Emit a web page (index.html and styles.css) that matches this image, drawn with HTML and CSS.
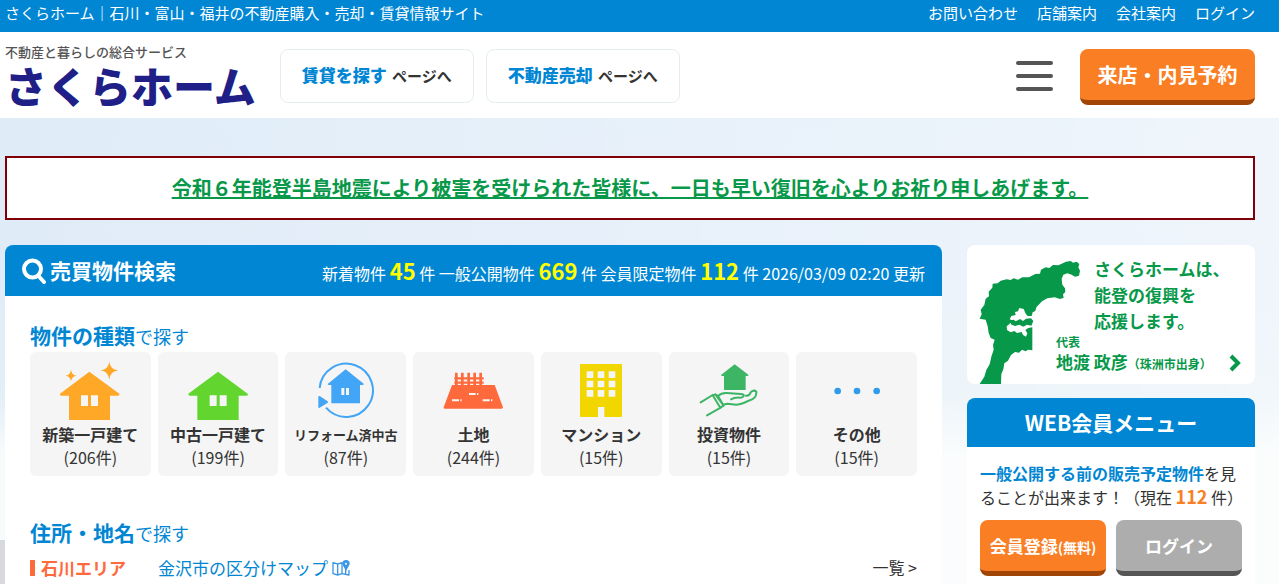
FILE: index.html
```html
<!DOCTYPE html>
<html lang="ja">
<head>
    <meta charset="UTF-8">
    <meta name="viewport" content="width=device-width, initial-scale=1.0">
    <title>さくらホーム｜石川・富山・福井の不動産購入・売却・賃貸情報サイト</title>
    <link rel="stylesheet" href="styles.css">
</head>
<body>
    <!-- Top Bar -->
    <div class="top-bar">
        <p>さくらホーム｜石川・富山・福井の不動産購入・売却・賃貸情報サイト</p>
        <nav class="top-nav">
            <a href="#">お問い合わせ</a>
            <a href="#">店舗案内</a>
            <a href="#">会社案内</a>
            <a href="#">ログイン</a>
        </nav>
    </div>

    <!-- Header -->
    <header class="header">
        <a href="#" class="logo">
            <span class="logo-tagline">不動産と暮らしの総合サービス</span>
            <span class="logo-name">さくらホーム</span>
        </a>
        <a href="#" class="page-link"><b>賃貸を探す</b> ページへ</a>
        <a href="#" class="page-link"><b>不動産売却</b> ページへ</a>
        <button class="menu-btn" aria-label="メニュー">
            <span></span>
            <span></span>
            <span></span>
        </button>
        <button class="btn reserve-btn">来店・内見予約</button>
    </header>

    <div class="container">
        <div class="notice">
            <a href="#">令和６年能登半島地震により被害を受けられた皆様に、一日も早い復旧を心よりお祈り申しあげます。</a>
        </div>

        <div class="columns">
            <!-- Search Panel -->
            <main class="panel">
                <div class="panel-header">
                    <h1>
                        <svg class="search-icon" viewBox="0 0 24 26" aria-hidden="true">
                            <circle cx="10.500" cy="11" r="8.500" fill="none" stroke="#fff" stroke-width="4"/>
                            <path d="M16.500 18l5.500 6" stroke="#fff" stroke-width="4" stroke-linecap="round"/>
                        </svg>
                        売買物件検索
                    </h1>
                    <p class="stats">新着物件 <strong>45</strong> 件 一般公開物件 <strong>669</strong> 件 会員限定物件 <strong>112</strong> 件 2026/03/09 02:20 更新</p>
                </div>

                <div class="panel-body">
                    <h2><b>物件の種類</b>で探す</h2>
                    <div class="type-list">
                        <a href="#" class="type-item">
                            <svg viewBox="120 45 180 180" aria-hidden="true">
                                <g fill="#ffa726">
                                    <path d="M208 80L299 147Q298 152 294 152H270V226H147V152H123Q119 150 120 146Z"/>
                                    <path d="M268 50Q270 73 295 76Q270 80 268 104Q265 80 242 76Q265 73 268 50Z"/>
                                    <path d="M153 74Q155 90 170 92Q155 94 153 109Q151 94 136 92Q151 90 153 74Z"/>
                                </g>
                                <path d="M183 151h21v32h-21zM213 151h21v32h-21z" fill="#f5f5f5"/>
                            </svg>
                            <span class="type-name">新築一戸建て</span>
                            <span>(206件)</span>
                        </a>
                        <a href="#" class="type-item">
                            <svg viewBox="502 45 180 180" aria-hidden="true">
                                <path d="M592 80L682 147Q682 152 678 152H654V226H530V152H507Q502 150 503 146Z" fill="#62d62f"/>
                                <path d="M567 151h21v32h-21zM597 151h21v32h-21z" fill="#f5f5f5"/>
                            </svg>
                            <span class="type-name">中古一戸建て</span>
                            <span>(199件)</span>
                        </a>
                        <a href="#" class="type-item">
                            <svg viewBox="122 45 180 180" aria-hidden="true">
                                <path d="M133 129A80 80 0 1 1 152 188" fill="none" stroke="#42a5f5" stroke-width="6"/>
                                <path d="M211 73L266 117Q265 120 261 120H254V175H168V120H160Q157 119 157 117Z" fill="#42a5f5"/>
                                <path d="M129 155Q129 151 134 154L157 169Q160 172 156 174L133 188Q129 190 129 186Z" fill="#42a5f5"/>
                                <path d="M198 129h9v21h-9zM212 129h9v21h-9z" fill="#f5f5f5"/>
                            </svg>
                            <span class="type-name type-name-small">リフォーム済中古</span>
                            <span>(87件)</span>
                        </a>
                        <a href="#" class="type-item">
                            <svg viewBox="505 45 180 180" aria-hidden="true">
                                <path d="M532 120H660L685 187Q684 191 681 191H510Q506 190 507 187Z" fill="#ff6a3d"/>
                                <path d="M545 83V124M563 83V124M582 83V124M600 83V124M618 83V124" stroke="#ff6a3d" stroke-width="8"/>
                                <path d="M539 100H627M539 113H627" stroke="#ff6a3d" stroke-width="7"/>
                                <path d="M583 147H603M607 147H611M532 166H553M557 166H561M624 166H645M649 166H653" stroke="#f5f5f5" stroke-width="6"/>
                            </svg>
                            <span class="type-name">土地</span>
                            <span>(244件)</span>
                        </a>
                        <a href="#" class="type-item">
                            <svg viewBox="108 45 180 180" aria-hidden="true">
                                <path d="M137 57H259Q261 57 261 59V213Q261 216 258 216H208V186H189V216H138Q135 216 135 213V59Q135 57 137 57Z" fill="#f2d600"/>
                                <path d="M155 79h20v20h-20zM188 79h20v20h-20zM221 79h20v20h-20zM155 107h20v20h-20zM188 107h20v20h-20zM221 107h20v20h-20zM155 135h20v20h-20zM188 135h20v20h-20zM221 135h20v20h-20z" fill="#f5f5f5"/>
                            </svg>
                            <span class="type-name">マンション</span>
                            <span>(15件)</span>
                        </a>
                        <a href="#" class="type-item">
                            <svg viewBox="492 45 180 180" aria-hidden="true">
                                <path d="M599 58L641 90Q640 93 636 93H632V135H567V93H561Q557 92 558 90Z" fill="#3cb565"/>
                                <g fill="none" stroke="#3cb565" stroke-width="6" stroke-linecap="round" stroke-linejoin="round">
                                    <path d="M497 172L533 150M516 211L557 188"/>
                                    <path d="M533 151L541 148L566 182L556 188ZM541 148L549 153L563 177"/>
                                    <path d="M549 153Q560 143 575 144L617 147Q628 148 626 153Q624 158 614 158Q598 157 588 163"/>
                                    <path d="M632 152Q643 154 647 142Q657 133 664 140Q666 161 641 167Q621 178 604 179L577 176L563 179"/>
                                </g>
                            </svg>
                            <span class="type-name">投資物件</span>
                            <span>(15件)</span>
                        </a>
                        <a href="#" class="type-item">
                            <svg viewBox="876 45 180 180" aria-hidden="true">
                                <g fill="#2f9bea">
                                    <circle cx="908" cy="138" r="10"/>
                                    <circle cx="966" cy="138" r="10"/>
                                    <circle cx="1025" cy="138" r="10"/>
                                </g>
                            </svg>
                            <span class="type-name">その他</span>
                            <span>(15件)</span>
                        </a>
                    </div>

                    <h2><b>住所・地名</b>で探す</h2>
                    <div class="area-row">
                        <h3>石川エリア</h3>
                        <a href="#" class="map-link">
                            金沢市の区分けマップ
                            <svg viewBox="0 0 54 48" aria-hidden="true">
                                <g fill="none" stroke="#3b97e3" stroke-width="4" stroke-linejoin="round">
                                    <path d="M3 8L17 12V45L3 41ZM17 12L30 8V41L17 45M30 41L51 45V30M30 41V8M41 28V43"/>
                                </g>
                                <path d="M42 0C32 0 29 8 32 15L42 33L52 15C55 8 52 0 42 0Z" fill="#3b97e3"/>
                                <circle cx="42" cy="11" r="3" fill="#fff"/>
                            </svg>
                        </a>
                        <a href="#" class="list-link">一覧 &gt;</a>
                    </div>
                </div>
            </main>

            <!-- Sidebar -->
            <aside class="sidebar">
                <a href="#" class="banner">
                    <svg class="noto-map" viewBox="57 60 306 372" aria-hidden="true">
                        <path d="M318 65L332 63L339 68L350 65L358 72L355 82L360 92L357 107L345 110L335 104L322 100L310 104L305 116L307 134L315 145L316 156L309 163L311 173L300 177L284 172L262 175L246 184L229 202L226 213L218 217L215 228L203 228L197 221L191 207L178 204L174 214L165 216L167 225L154 228L149 238L160 242L152 249L140 259L141 270L152 277L163 273L171 279L185 276L189 285L198 290L202 280L196 270L205 264L217 262V331L204 329L197 334L186 329L177 338L165 336L153 345L144 362L133 370L130 388L124 402L123 432H59L73 410L79 390L89 373L94 350L101 329L99 315L104 299L92 294L86 279L83 259L77 239L59 236L65 223L62 209L73 195L77 176L87 169L86 155L97 143L98 131L113 130L122 122L140 118L152 120L161 115L174 119L187 112L207 112L226 102L240 101L243 89L257 82L268 84L279 75L295 76Z" fill="#079849"/>
                        <path d="M151 241L161 239L167 244L180 237L189 243L198 236L213 235L220 243L214 257L201 254L190 260L178 254L166 258L154 254Z" fill="#079849"/>
                    </svg>
                    <div class="banner-text">
                        <p class="slogan">さくらホームは、<br>能登の復興を<br>応援します。</p>
                        <p class="position">代表</p>
                        <p class="name">地渡 政彦<small>（珠洲市出身）</small></p>
                    </div>
                    <svg class="banner-arrow" viewBox="0 0 12 18" aria-hidden="true">
                        <path d="M2 2l7 7-7 7" fill="none" stroke="#079849" stroke-width="4"/>
                    </svg>
                </a>

                <section class="member">
                    <h2>WEB会員メニュー</h2>
                    <p><b>一般公開する前の販売予定物件</b>を見ることが出来ます！（現在 <strong>112</strong> 件）</p>
                    <div class="member-buttons">
                        <button class="btn">会員登録<small>(無料)</small></button>
                        <button class="btn login-btn">ログイン</button>
                    </div>
                </section>
            </aside>
        </div>
    </div>
</body>
</html>
```
FILE: styles.css
```css
* {
    margin: 0;
    padding: 0;
    box-sizing: border-box;
}

body {
    display: flex;
    flex-direction: column;
    min-height: 100vh;
    font-family: "Noto Sans CJK JP", sans-serif;
    font-size: 16px;
    line-height: 23px;
    color: #333;
    background:
        linear-gradient(#d8d9dd, #d8d9dd) left bottom / 5px 44px no-repeat,
        linear-gradient(to right, transparent, rgba(255, 255, 255, 0.5)),
        linear-gradient(#dfecf8 20%, #e0ebf8 45%, #e3eff6 68%, #f8fbfc 78%);
}

a {
    color: inherit;
    text-decoration: none;
}

button {
    font-family: inherit;
    border: none;
    cursor: pointer;
}

/* Top Bar */
.top-bar {
    display: flex;
    justify-content: space-between;
    height: 32px;
    padding: 0 24px 0 5px;
    background-color: #0086d3;
    color: white;
    font-size: 15px;
    line-height: 26px;
}

.top-nav {
    display: flex;
    gap: 19px;
}

/* Header */
.header {
    display: flex;
    align-items: center;
    gap: 12px;
    height: 86px;
    padding: 2px 24px 0 5px;
    background-color: white;
}

.logo {
    display: flex;
    flex-direction: column;
    margin-right: 12px;
}

.logo-tagline {
    font-size: 13px;
    font-weight: 500;
    line-height: 18px;
    color: #555;
}

.logo-name {
    font-size: 42px;
    font-weight: 900;
    line-height: 48px;
    color: #201f88;
}

.page-link {
    width: 194px;
    height: 54px;
    border: 1px solid #e4efed;
    border-radius: 8px;
    font-size: 15px;
    font-weight: bold;
    line-height: 50px;
    text-align: center;
}

.page-link b {
    margin-right: 2px;
    font-size: 17px;
    color: #0086d3;
}

.menu-btn {
    display: flex;
    flex-direction: column;
    gap: 9px;
    width: 37px;
    margin-left: auto;
    margin-right: 15px;
    background: none;
}

.menu-btn span {
    height: 4px;
    border-radius: 2px;
    background-color: #555;
}

.btn {
    height: 56px;
    border-bottom: 5px solid #a14507;
    border-radius: 8px;
    background-color: #fa7e23;
    color: white;
    font-size: 17px;
    font-weight: bold;
}

.btn small {
    font-size: 14px;
}

.reserve-btn {
    width: 175px;
    margin-top: 2px;
    font-size: 20px;
}

.container {
    display: flex;
    flex: 1;
    flex-direction: column;
    padding: 38px 24px 0 5px;
}

.notice {
    margin-bottom: 25px;
    border: 2px solid #800008;
    background-color: white;
    color: #079849;
    font-size: 20px;
    font-weight: bold;
    line-height: 60px;
    text-align: center;
}

.notice a {
    text-decoration: underline;
}

.columns {
    display: grid;
    flex: 1;
    grid-template-columns: 937fr 288fr;
    gap: 25px;
}

/* Search Panel */
.panel {
    border-radius: 8px 8px 0 0;
    background-color: white;
    overflow: hidden;
}

.panel-header {
    display: flex;
    align-items: center;
    justify-content: space-between;
    height: 51px;
    padding: 0 17px;
    background-color: #0086d3;
    color: white;
}

.panel-header h1 {
    display: flex;
    align-items: center;
    gap: 4px;
    font-size: 21px;
}

.search-icon {
    width: 24px;
    height: 26px;
}

.stats {
    padding-top: 3px;
}

.stats strong {
    font-size: 22px;
    color: #ff0;
}

.panel-body {
    padding: 25px 25px 0;
}

.panel-body h2 {
    margin-bottom: 2px;
    font-size: 18px;
    font-weight: normal;
    line-height: 28px;
    color: #0086d3;
}

.panel-body h2 b {
    font-size: 21px;
}

.type-list {
    display: grid;
    grid-template-columns: repeat(7, 1fr);
    gap: 7px;
    margin-bottom: 42px;
}

.type-item {
    display: flex;
    flex-direction: column;
    align-items: center;
    padding: 8px 0 7px;
    border-radius: 6px;
    background-color: #f5f5f5;
}

.type-item svg {
    width: 60px;
    height: 60px;
    margin-bottom: 3px;
}

.type-name {
    font-weight: bold;
}

.type-name-small {
    font-size: 13px;
}

.area-row {
    display: flex;
    align-items: center;
    padding-top: 7px;
}

.area-row h3 {
    padding-left: 6px;
    border-left: 5px solid #ff6a3d;
    color: #ff6a3d;
    font-size: 17px;
    line-height: 16px;
}

.map-link {
    display: flex;
    align-items: center;
    gap: 4px;
    margin-left: 32px;
    color: #0086d3;
    font-size: 17px;
}

.map-link svg {
    width: 18px;
    height: 16px;
}

.list-link {
    margin-left: auto;
}

/* Sidebar */
.sidebar {
    display: flex;
    flex-direction: column;
}

.banner {
    display: grid;
    height: 139px;
    margin-bottom: 14px;
    border-radius: 8px;
    background-color: white;
    color: #079849;
    font-weight: bold;
}

.noto-map,
.banner-text,
.banner-arrow {
    grid-area: 1 / 1;
}

.noto-map {
    align-self: end;
    width: 102px;
    height: 124px;
    margin-left: 12px;
}

.banner-text {
    padding: 11px 0 0 89px;
}

.slogan {
    padding-left: 38px;
    font-size: 17px;
    line-height: 26px;
}

.position {
    font-size: 12px;
    line-height: 16px;
}

.name {
    font-size: 17px;
}

.name small {
    font-size: 12px;
}

.banner-arrow {
    place-self: end;
    width: 12px;
    height: 18px;
    margin: 0 14px 12px 0;
}

.member {
    flex: 1;
    border-radius: 8px 8px 0 0;
    background-color: white;
    overflow: hidden;
}

.member h2 {
    background-color: #0086d3;
    color: white;
    font-size: 21px;
    line-height: 49px;
    text-align: center;
}

.member p {
    padding: 15px 5px 11px 13px;
}

.member p b {
    color: #0086d3;
}

.member p strong {
    color: #fa7e23;
    font-size: 18px;
}

.member-buttons {
    display: grid;
    grid-template-columns: 1fr 1fr;
    gap: 10px;
    padding: 0 13px;
}

.login-btn {
    border-bottom-color: #555;
    background-color: #adadad;
}
```
